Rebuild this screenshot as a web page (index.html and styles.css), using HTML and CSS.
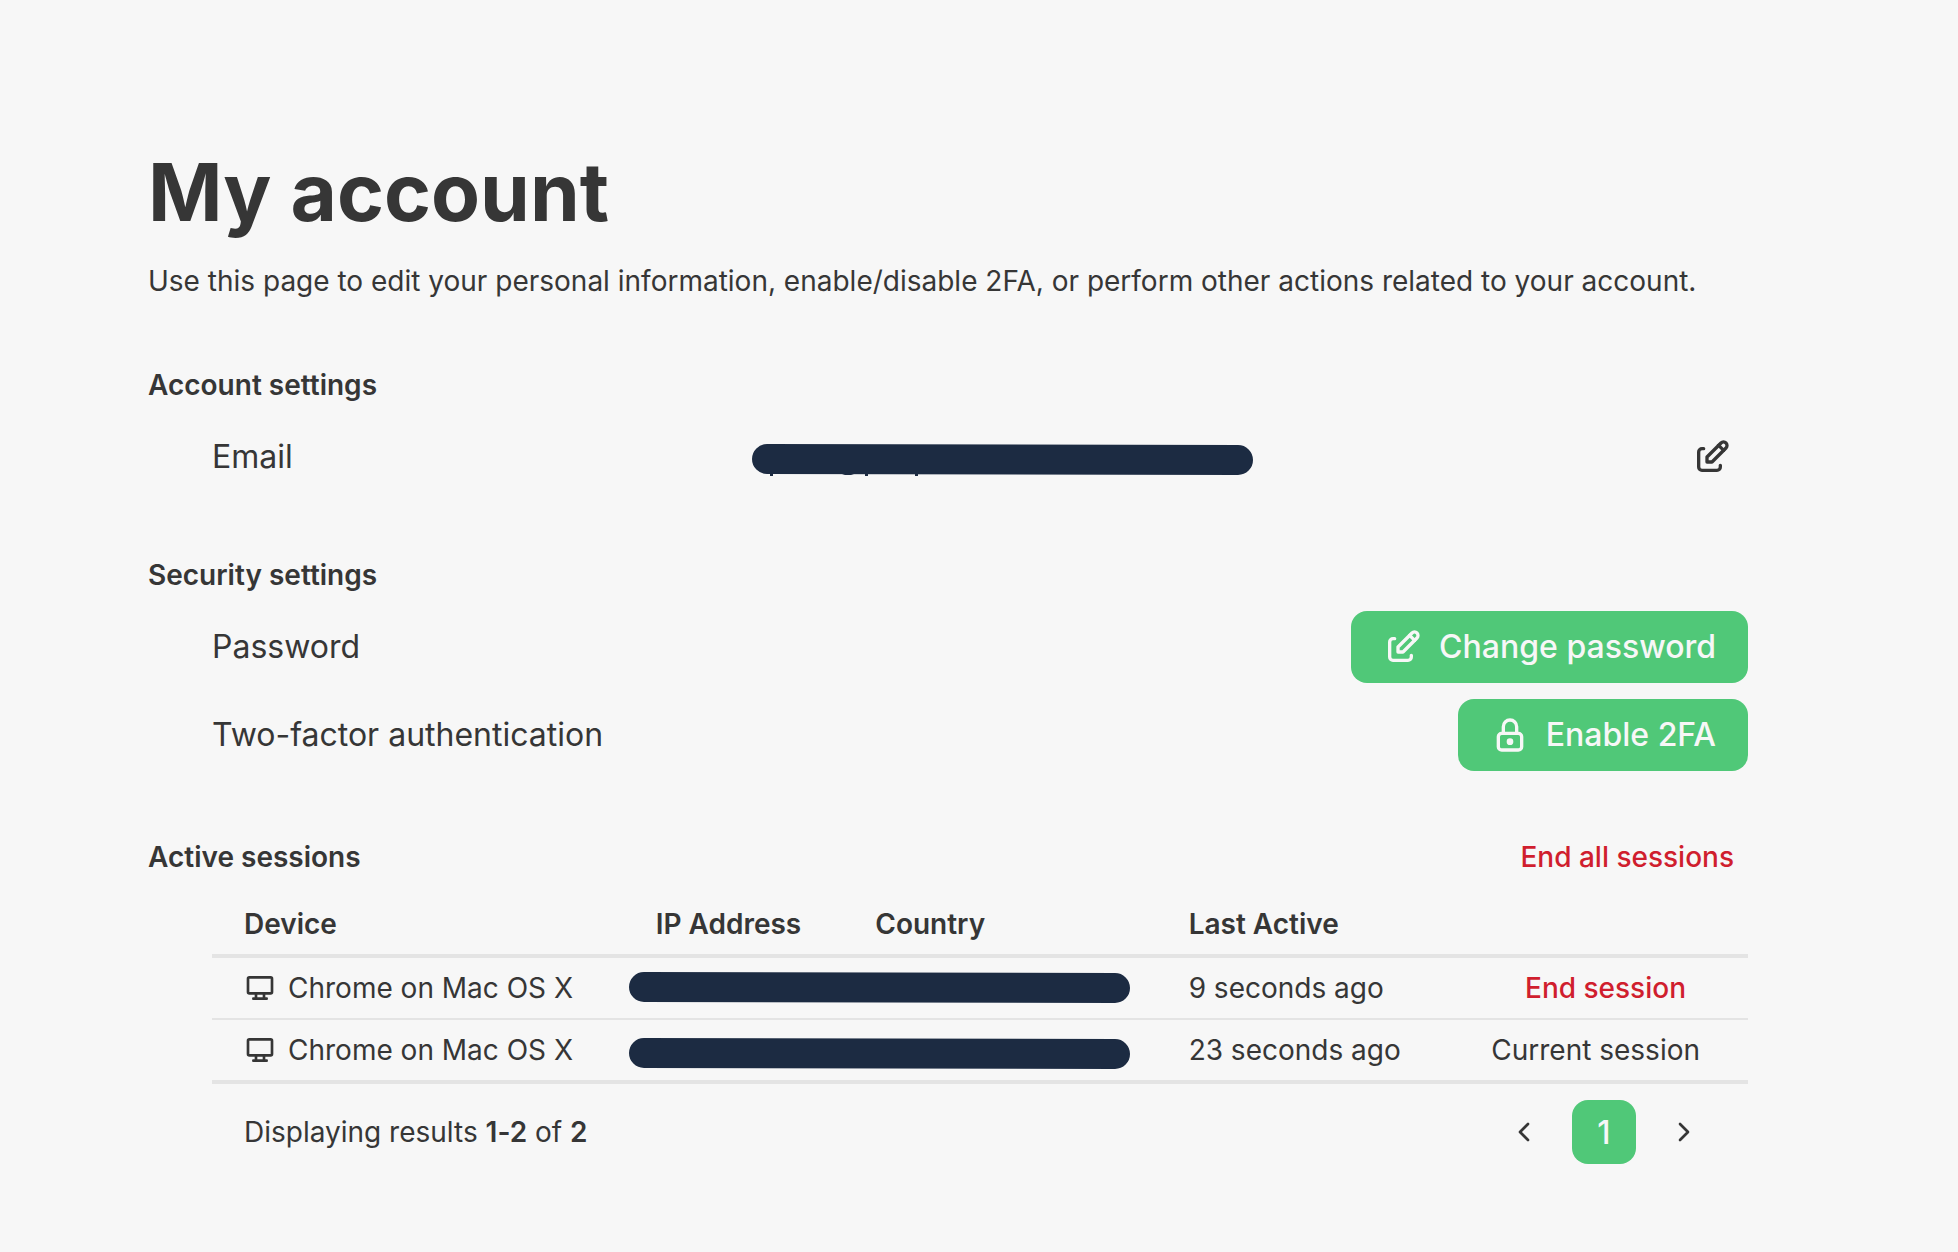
FILE: index.html
```html
<!DOCTYPE html>
<html lang="en">
<head>
    <meta charset="UTF-8">
    <meta name="viewport" content="width=device-width, initial-scale=1.0">
    <title>My account</title>
    <link rel="stylesheet" href="styles.css">
</head>
<body>
    <!-- shared icons -->
    <svg class="sprite" aria-hidden="true">
        <symbol id="icon-edit" viewBox="0 0 24 24">
            <path d="M7 7h-1a2 2 0 0 0 -2 2v9a2 2 0 0 0 2 2h9a2 2 0 0 0 2 -2v-1"/>
            <path d="M20.385 6.585a2.1 2.1 0 0 0 -2.97 -2.97l-8.415 8.385v3h3l8.385 -8.415z"/>
            <path d="M16 5l3 3"/>
        </symbol>
        <symbol id="icon-lock" viewBox="0 0 24 24">
            <path d="M5 13a2 2 0 0 1 2 -2h10a2 2 0 0 1 2 2v6a2 2 0 0 1 -2 2h-10a2 2 0 0 1 -2 -2v-6z"/>
            <path d="M11 16a1 1 0 1 0 2 0a1 1 0 0 0 -2 0"/>
            <path d="M8 11v-4a4 4 0 1 1 8 0v4"/>
        </symbol>
        <symbol id="icon-desktop" viewBox="0 0 24 24">
            <path d="M3 5a1 1 0 0 1 1 -1h16a1 1 0 0 1 1 1v10a1 1 0 0 1 -1 1h-16a1 1 0 0 1 -1 -1v-10z"/>
            <path d="M7 20h10"/>
            <path d="M9 16v4"/>
            <path d="M15 16v4"/>
        </symbol>
        <symbol id="icon-left" viewBox="0 0 24 24">
            <path d="M15 6l-6 6l6 6"/>
        </symbol>
        <symbol id="icon-right" viewBox="0 0 24 24">
            <path d="M9 6l6 6l-6 6"/>
        </symbol>
        <symbol id="redacted" viewBox="0 0 501 32">
            <path d="M15 0L486 1a15 15 0 0 1 0 30L15 30a15 15 0 0 1 0 -30z"/>
        </symbol>
    </svg>

    <main class="account">
        <header>
            <h1>My account</h1>
            <p class="intro">Use this page to edit your personal information, enable/disable 2FA, or perform other actions related to your account.</p>
        </header>

        <section>
            <h2>Account settings</h2>
            <div class="rows">
                <div class="row row-email">
                    <span class="row-label">Email</span>
                    <svg class="redacted" viewBox="0 0 501 32" role="img" aria-label="Hidden email">
                        <use href="#redacted"/>
                        <path d="M18 29h3v3h-3zM90 30h12l-3 1h-6zM113 29h3v3h-3zM163 29h3v3h-3z"/>
                    </svg>
                    <button class="icon-button" type="button" aria-label="Edit email">
                        <svg class="icon"><use href="#icon-edit"/></svg>
                    </button>
                </div>
            </div>
        </section>

        <section>
            <h2>Security settings</h2>
            <div class="rows">
                <div class="row">
                    <span class="row-label">Password</span>
                    <button class="button" type="button">
                        <svg class="icon"><use href="#icon-edit"/></svg>
                        Change password
                    </button>
                </div>
                <div class="row">
                    <span class="row-label">Two-factor authentication</span>
                    <button class="button" type="button">
                        <svg class="icon"><use href="#icon-lock"/></svg>
                        Enable 2FA
                    </button>
                </div>
            </div>
        </section>

        <section>
            <div class="section-head">
                <h2>Active sessions</h2>
                <button class="danger" type="button">End all sessions</button>
            </div>
            <div class="rows">
                <table class="sessions">
                    <colgroup>
                        <col class="col-device">
                        <col class="col-ip">
                        <col class="col-country">
                        <col class="col-active">
                        <col>
                    </colgroup>
                    <thead>
                        <tr>
                            <th scope="col">Device</th>
                            <th scope="col">IP Address</th>
                            <th scope="col">Country</th>
                            <th scope="col">Last Active</th>
                            <td></td>
                        </tr>
                    </thead>
                    <tbody>
                        <tr>
                            <td>
                                <div class="device">
                                    <svg class="icon icon-small"><use href="#icon-desktop"/></svg>
                                    Chrome on Mac OS X
                                </div>
                            </td>
                            <td class="hidden-cell" colspan="2">
                                <svg class="redacted" role="img" aria-label="Hidden address"><use href="#redacted"/></svg>
                            </td>
                            <td>9 seconds ago</td>
                            <td class="action"><button class="danger" type="button">End session</button></td>
                        </tr>
                        <tr>
                            <td>
                                <div class="device">
                                    <svg class="icon icon-small"><use href="#icon-desktop"/></svg>
                                    Chrome on Mac OS X
                                </div>
                            </td>
                            <td class="hidden-cell hidden-low" colspan="2">
                                <svg class="redacted" role="img" aria-label="Hidden address"><use href="#redacted"/></svg>
                            </td>
                            <td>23 seconds ago</td>
                            <td class="action">Current session</td>
                        </tr>
                    </tbody>
                </table>
                <div class="table-footer">
                    <p>Displaying results <b>1-2</b> of <b>2</b></p>
                    <nav class="pagination" aria-label="Pages">
                        <button class="page" type="button" aria-label="Previous page">
                            <svg class="icon icon-small"><use href="#icon-left"/></svg>
                        </button>
                        <button class="page page-current" type="button">1</button>
                        <button class="page" type="button" aria-label="Next page">
                            <svg class="icon icon-small"><use href="#icon-right"/></svg>
                        </button>
                    </nav>
                </div>
            </div>
        </section>
    </main>
</body>
</html>
```
FILE: styles.css
```css
* {
    box-sizing: border-box;
}
body {
    margin: 0;
    background: #f7f7f7;
    color: #363636;
    font-family: Inter, sans-serif;
    font-size: 28px;
    line-height: 40px;
    font-variant-ligatures: none;
}
.sprite {
    display: none;
}
.account {
    max-width: 1958px;
    padding: 152px 210px 64px 148px;
}
h1 {
    margin: 0 0 29px;
    font-size: 80px;
    line-height: 80px;
    font-weight: 700;
}
h2 {
    margin: 0;
    font-size: 28px;
    line-height: 40px;
    font-weight: 600;
}
p {
    margin: 0;
}
section {
    margin-top: 64px;
}
button {
    border: none;
    background: none;
    color: inherit;
    font-family: inherit;
    cursor: pointer;
}
.icon {
    width: 40px;
    height: 40px;
    flex: none;
    fill: none;
    stroke: currentColor;
    stroke-width: 2;
    stroke-linecap: round;
    stroke-linejoin: round;
}
.icon-small {
    width: 32px;
    height: 32px;
}
.redacted {
    display: block;
    width: 501px;
    height: 32px;
    fill: #1c2b42;
}

/* settings rows */
.rows {
    padding: 16px 0 0 64px;
}
.row {
    display: flex;
    align-items: center;
    justify-content: space-between;
    font-size: 32px;
}
.row + .row {
    margin-top: 16px;
}
.row-email {
    display: grid;
    grid-template-columns: 540px 1fr auto;
    height: 70px;
}
.row-email .redacted {
    margin-top: 6px;
}
.icon-button {
    display: flex;
    padding: 16px;
}
.button {
    display: flex;
    align-items: center;
    gap: 16px;
    padding: 16px 32px;
    border-radius: 16px;
    background: #50c878;
    color: #f7f7f7;
    font-size: 32px;
    line-height: 40px;
    font-weight: 500;
}
.section-head {
    display: flex;
    align-items: center;
    justify-content: space-between;
    min-height: 43px;
}
.danger {
    padding: 0 14px;
    color: #d01e2e;
    font-size: 28px;
    line-height: 40px;
    font-weight: 500;
}

/* sessions table */
.sessions {
    width: 100%;
    table-layout: fixed;
    border-collapse: separate;
    border-spacing: 0;
    border-bottom: 4px solid #e4e4e4;
}
.col-device {
    width: 26.8%;
}
.col-ip {
    width: 14.3%;
}
.col-country {
    width: 20.4%;
}
.col-active {
    width: 19%;
}
th, td {
    height: 60px;
    padding: 0 0 0 32px;
    text-align: left;
    white-space: nowrap;
}
th {
    font-weight: 600;
}
thead th, thead td {
    height: 64px;
    border-bottom: 4px solid #e4e4e4;
}
tbody tr + tr td {
    height: 62px;
    border-top: 2px solid #e4e4e4;
}
.device {
    display: flex;
    align-items: center;
    gap: 12px;
}
.hidden-cell {
    padding-left: 5px;
}
.hidden-low {
    padding-top: 8px;
}
.sessions .action {
    padding-right: 48px;
    text-align: right;
}
.table-footer {
    display: flex;
    align-items: center;
    justify-content: space-between;
    padding: 16px 32px 0;
}
b {
    font-weight: 600;
}
.pagination {
    display: flex;
    gap: 16px;
}
.page {
    display: flex;
    align-items: center;
    justify-content: center;
    width: 64px;
    height: 64px;
    padding: 0;
    border-radius: 16px;
    font-size: 32px;
    font-weight: 500;
}
.page-current {
    background: #50c878;
    color: #f7f7f7;
}
```
